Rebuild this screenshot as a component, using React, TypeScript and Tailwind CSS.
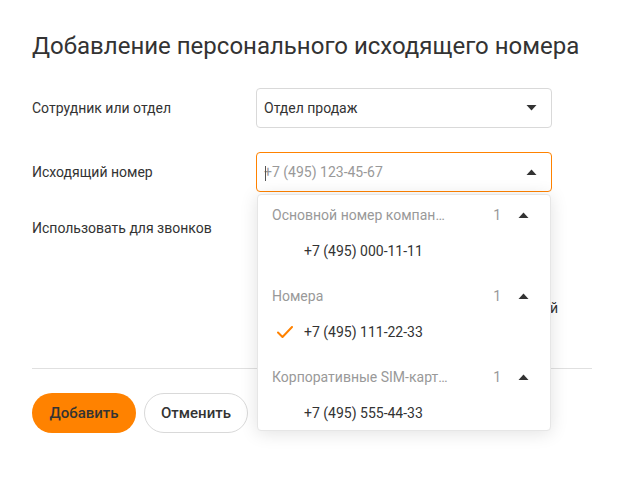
type Group = {
  title: string;
  count: number;
  numbers: { value: string; checked?: boolean }[];
};

const groups: Group[] = [
  {
    title: "Основной номер компании",
    count: 1,
    numbers: [{ value: "+7 (495) 000-11-11" }],
  },
  {
    title: "Номера",
    count: 1,
    numbers: [{ value: "+7 (495) 111-22-33", checked: true }],
  },
  {
    title: "Корпоративные SIM-карты",
    count: 1,
    numbers: [{ value: "+7 (495) 555-44-33" }],
  },
];

function Triangle({ up = false }: { up?: boolean }) {
  return (
    <svg width="11" height="6" viewBox="0 0 11 6" className="shrink-0 text-[#333]">
      {up ? (
        <path d="M0.5 6 L5.5 0.5 L10.5 6 Z" fill="currentColor" />
      ) : (
        <path d="M0.5 0 L10.5 0 L5.5 5.5 Z" fill="currentColor" />
      )}
    </svg>
  );
}

function Check() {
  return (
    <svg width="16" height="12" viewBox="0 0 16 12" className="shrink-0">
      <path
        d="M1 6.5 L5.5 11 L15 1"
        fill="none"
        stroke="#ff8200"
        strokeWidth="2"
        strokeLinecap="round"
        strokeLinejoin="round"
      />
    </svg>
  );
}

function NumberDropdown() {
  return (
    <div className="absolute left-[1px] right-[1px] top-full mt-[2px] z-10 rounded-[4px] border border-[#e6e6e6] bg-white pb-[1px] shadow-[0_2px_18px_rgba(0,0,0,0.12)]">
      {groups.map((group, i) => (
        <div key={group.title} className={i < groups.length - 1 ? "mb-[9px]" : ""}>
          <div className="flex h-10 items-center pl-[14px] pr-[21px] text-[14px] text-[#999]">
            <span className="w-[176px] truncate">{group.title}</span>
            <span className="ml-auto mr-[17px]">{group.count}</span>
            <Triangle up />
          </div>
          {group.numbers.map((num) => (
            <div key={num.value} className="flex h-8 items-center text-[14px] text-[#333]">
              <div className="flex w-[46px] justify-end pr-[11px]">
                {num.checked && <Check />}
              </div>
              {num.value}
            </div>
          ))}
        </div>
      ))}
    </div>
  );
}

export default function App() {
  return (
    <div
      className="min-h-[477px] w-[624px] bg-white px-8 pt-8 text-[#333]"
      style={{ fontFamily: "Roboto, 'Noto Sans', sans-serif" }}
    >
      <h1 className="text-[24px] leading-[28px] font-normal text-[#333]">
        Добавление персонального исходящего номера
      </h1>

      <div className="mt-7 flex items-center">
        <div className="w-[224px] text-[14px]">Сотрудник или отдел</div>
        <div className="flex h-10 w-[296px] items-center rounded-[4px] border border-[#d9d9d9] pl-[7px] pr-[14px] text-[14px]">
          <span>Отдел продаж</span>
          <span className="ml-auto">
            <Triangle />
          </span>
        </div>
      </div>

      <div className="mt-6 flex items-center">
        <div className="w-[224px] text-[14px]">Исходящий номер</div>
        <div className="relative w-[296px]">
          <div className="relative flex h-10 items-center rounded-[4px] border border-[#ff8200] pl-[7px] pr-[14px] text-[14px]">
            <span className="absolute left-[8px] top-[13px] h-[15px] w-[1px] bg-[#555]" />
            <span className="text-[#999]">+7 (495) 123-45-67</span>
            <span className="ml-auto">
              <Triangle up />
            </span>
          </div>
          <NumberDropdown />
        </div>
      </div>

      <div className="mt-6 flex h-[128px]">
        <div className="w-[224px] text-[14px] leading-6">Использовать для звонков</div>
        <div className="flex flex-1 flex-col pr-[34px] pt-[80px] text-[14px] leading-6">
          <div className="flex justify-end whitespace-nowrap">Через выбранный номер линией</div>
        </div>
      </div>

      <div className="mt-6 h-px bg-[#e0e0e0]" />

      <div className="mt-6 flex gap-2">
        <button className="h-10 w-[104px] rounded-full bg-[#ff8200] text-[15px] font-medium text-[#333]">
          Добавить
        </button>
        <button className="h-10 w-[104px] rounded-full border border-[#d9d9d9] bg-white text-[15px] font-medium text-[#333]">
          Отменить
        </button>
      </div>
    </div>
  );
}
